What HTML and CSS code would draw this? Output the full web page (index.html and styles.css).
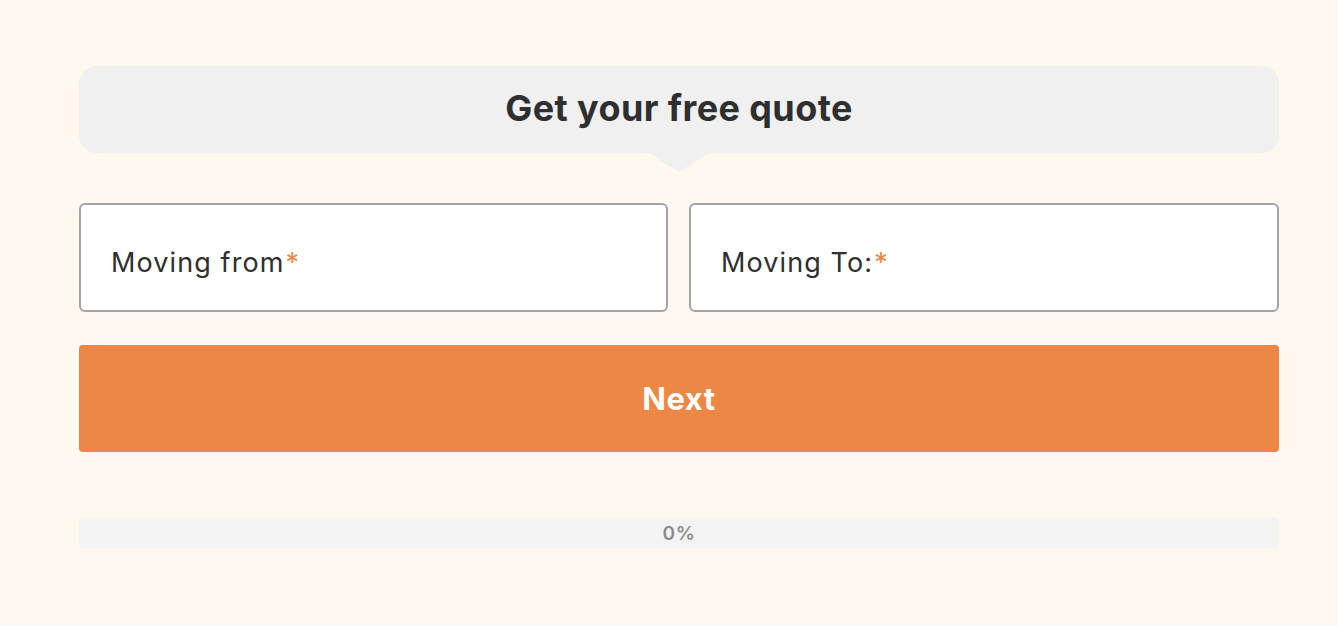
FILE: index.html
```html
<!DOCTYPE html>
<html lang="en">
<head>
    <meta charset="UTF-8">
    <meta name="viewport" content="width=device-width, initial-scale=1.0">
    <title>Get your free quote</title>
    <link rel="stylesheet" href="styles.css">
</head>
<body>
    <div class="container">
        <div class="quote-header">
            <h2>Get your free quote</h2>
        </div>

        <form id="quoteForm">
            <div class="field-row">
                <label class="field">
                    <span class="field-label">Moving from<span class="req">*</span></span>
                    <input type="text" name="from">
                </label>
                <label class="field">
                    <span class="field-label">Moving To:<span class="req">*</span></span>
                    <input type="text" name="to">
                </label>
            </div>
            <button type="submit">Next</button>
        </form>

        <div class="progress">
            <div class="progress-fill" style="width: 0%"></div>
            <span class="progress-text">0%</span>
        </div>
    </div>
</body>
</html>
```

FILE: styles.css
```css
* { margin: 0; padding: 0; box-sizing: border-box; }
body {
    font-family: Inter, 'Noto Sans', sans-serif;
    background: #fff8ee;
    color: #2f2f2f;
}
.container {
    width: 1200px;
    margin-left: 79px;
    padding-top: 66px;
}
.quote-header {
    position: relative;
    background: #f0f0f0;
    border-radius: 18px;
    height: 87px;
    display: flex;
    align-items: center;
    justify-content: center;
}
.quote-header::after {
    content: '';
    position: absolute;
    left: 50%;
    bottom: -19px;
    margin-left: -30px;
    border-left: 30px solid transparent;
    border-right: 30px solid transparent;
    border-top: 19px solid #f0f0f0;
}
h2 {
    font-size: 36px;
    font-weight: 700;
    letter-spacing: 0.4px;
    color: #2f2f2f;
    margin-top: -4px;
}
#quoteForm {
    margin-top: 50px;
}
.field-row {
    display: grid;
    grid-template-columns: 589px 590px;
    gap: 21px;
}
.field {
    position: relative;
    display: block;
    height: 109px;
    background: #fff;
    border: 2px solid #a4a3aa;
    border-radius: 6px;
}
.field-label {
    position: absolute;
    left: 30px;
    top: 41px;
    font-size: 27px;
    letter-spacing: 1.1px;
    color: #2f2f2f;
    pointer-events: none;
}
.req {
    color: #ec8747;
    margin-left: 1px;
}
.field input {
    width: 100%;
    height: 100%;
    border: none;
    background: transparent;
    outline: none;
}
button {
    display: block;
    width: 100%;
    height: 107px;
    margin-top: 33px;
    background: #ec8745;
    color: #fff;
    border: none;
    border-radius: 4px;
    font-family: Inter, 'Noto Sans', sans-serif;
    font-size: 31px;
    font-weight: 700;
    letter-spacing: 0.6px;
    cursor: pointer;
}
.progress {
    position: relative;
    margin-top: 65px;
    height: 31px;
    background: #f4f4f4;
    border-radius: 4px;
    display: flex;
    align-items: center;
    justify-content: center;
}
.progress-fill {
    position: absolute;
    left: 0;
    top: 0;
    bottom: 0;
    background: #ec8745;
    border-radius: 4px;
}
.progress-text {
    position: relative;
    font-size: 19px;
    font-weight: 600;
    letter-spacing: 0.6px;
    color: #8c8c8c;
    margin-top: 2px;
}
```
